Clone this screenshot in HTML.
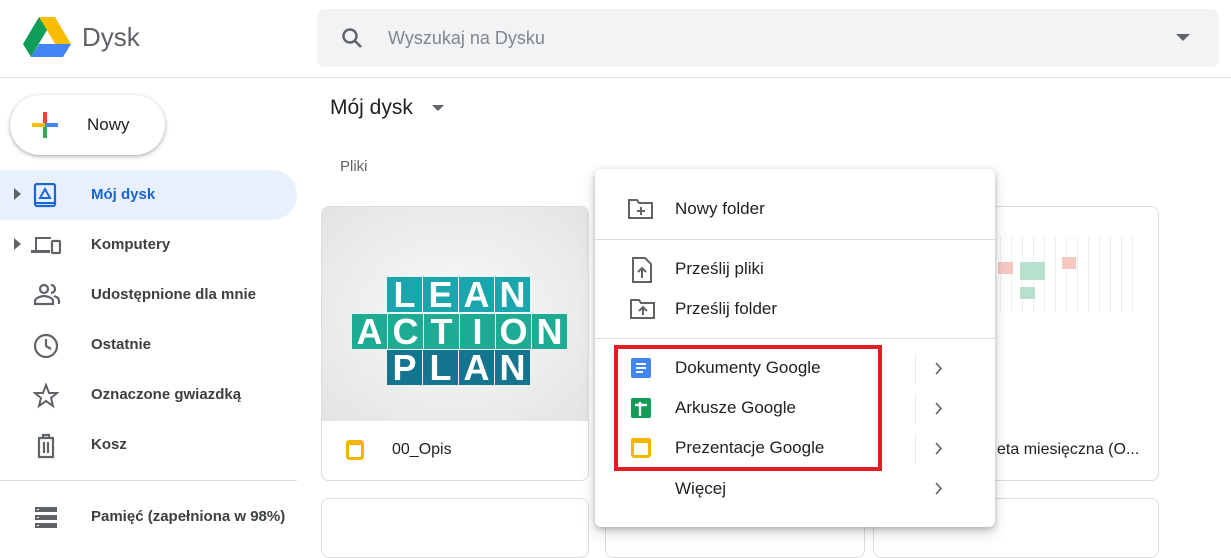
<!DOCTYPE html>
<html><head><meta charset="utf-8"><style>
*{margin:0;padding:0;box-sizing:border-box}
body{width:1231px;height:537px;overflow:hidden;background:#fff;font-family:"Liberation Sans",Arial,sans-serif;position:relative;color:#3c4043}
.a{position:absolute}
.nav{position:absolute;left:0;width:297px;height:50px;font-size:15px;font-weight:bold;color:#3c4043}
.nav span{position:absolute;left:91px;top:16px}
.nav svg{position:absolute;left:33px;top:13px}
.mi{position:absolute;left:675px;font-size:17px;color:#202124}
.vs{position:absolute;left:915px;width:1px;height:30px;background:#e8eaed}
.row{position:absolute;display:flex;gap:1px;font-size:36px;font-weight:bold;color:#fff;line-height:35px}
.row b{width:35px;height:35px;text-align:center}
</style></head><body>
<svg class="a" style="left:23px;top:17px" width="48" height="40" viewBox="0 0 48 40">
<polygon points="16,0 32,0 48,27 40,40" fill="#fbbc04"/>
<polygon points="16,0 0,27 8,40 24,13" fill="#0f9d58"/>
<polygon points="8,40 40,40 48,27 16,27" fill="#4285f4"/>
</svg>
<div class="a" style="left:82px;top:22px;font-size:26px;color:#5f6368">Dysk</div>
<div class="a" style="left:317px;top:9px;width:902px;height:58px;background:#f1f3f4;border-radius:8px"></div>
<svg class="a" style="left:340px;top:26px" width="24" height="24" viewBox="0 0 24 24"><circle cx="10" cy="10" r="6.5" fill="none" stroke="#5f6368" stroke-width="2.4"/><line x1="15" y1="15" x2="21" y2="21" stroke="#5f6368" stroke-width="2.6"/></svg>
<div class="a" style="left:388px;top:28px;font-size:18px;color:#80868b">Wyszukaj na Dysku</div>
<svg class="a" style="left:1176px;top:34px" width="14" height="8"><polygon points="0,0 14,0 7,7" fill="#5f6368"/></svg>
<div class="a" style="left:0;top:77px;width:1231px;height:1px;background:#dadce0"></div>
<div class="a" style="left:10px;top:95px;width:155px;height:60px;border-radius:30px;box-shadow:0 1px 3px rgba(60,64,67,.35),0 2px 6px rgba(60,64,67,.15);background:#fff"></div>
<svg class="a" style="left:30px;top:110px" width="30" height="30" viewBox="0 0 30 30"><rect x="13" y="2" width="4" height="13" fill="#ea4335"/><rect x="13" y="15" width="4" height="13" fill="#34a853"/><rect x="2" y="13" width="13" height="4" fill="#fbbc04"/><rect x="15" y="13" width="13" height="4" fill="#4285f4"/></svg>
<div class="a" style="left:87px;top:115px;font-size:17px;color:#202124">Nowy</div>
<div class="nav" style="top:170px;background:#e8f0fe;border-radius:0 25px 25px 0;color:#1967d2"><svg style="left:14px;top:18px" width="8" height="12"><polygon points="0,0 7,6 0,12" fill="#5f6368"/></svg><svg width="24" height="26" viewBox="0 0 24 26"><rect x="2" y="1" width="20" height="22" rx="2" fill="none" stroke="#1967d2" stroke-width="2.2"/><polygon points="12,6 17,15 7,15" fill="none" stroke="#1967d2" stroke-width="2"/><line x1="3" y1="20" x2="21" y2="20" stroke="#1967d2" stroke-width="2"/></svg><span>Mój dysk</span></div>
<div class="nav" style="top:220px"><svg style="left:14px;top:18px" width="8" height="12"><polygon points="0,0 7,6 0,12" fill="#5f6368"/></svg><svg style="left:31px" width="30" height="24" viewBox="0 0 30 24"><path d="M4 4h16v2H6v11H4z M0 17h19v3H0z" fill="#5f6368"/><rect x="21" y="8" width="8" height="12" rx="1" fill="none" stroke="#5f6368" stroke-width="2.2"/></svg><span>Komputery</span></div>
<div class="nav" style="top:270px"><svg width="30" height="24" viewBox="0 0 30 24"><circle cx="11" cy="6" r="4" fill="none" stroke="#5f6368" stroke-width="2.2"/><path d="M2 21v-3c0-3 6-5 9-5s9 2 9 5v3z" fill="none" stroke="#5f6368" stroke-width="2.2"/><path d="M18 2a4 4 0 010 8 M21 13c3 1 5 2 5 5v3" fill="none" stroke="#5f6368" stroke-width="2.2"/></svg><span>Udostępnione dla mnie</span></div>
<div class="nav" style="top:320px"><svg width="26" height="26" viewBox="0 0 26 26"><circle cx="13" cy="13" r="11" fill="none" stroke="#5f6368" stroke-width="2.2"/><path d="M13 6v7l5 3" fill="none" stroke="#5f6368" stroke-width="2.2"/></svg><span>Ostatnie</span></div>
<div class="nav" style="top:370px"><svg width="26" height="26" viewBox="0 0 26 26"><polygon points="13,2 16,10 24,10 18,15 20,23 13,18 6,23 8,15 2,10 10,10" fill="none" stroke="#5f6368" stroke-width="2"/></svg><span>Oznaczone gwiazdką</span></div>
<div class="nav" style="top:420px"><svg width="26" height="26" viewBox="0 0 26 26"><path d="M5 5h16 M10 5V2h6v3 M6 5v19h14V5 M11 9v11 M15 9v11" fill="none" stroke="#5f6368" stroke-width="2.2"/></svg><span>Kosz</span></div>
<div class="a" style="left:0;top:480px;width:297px;height:1px;background:#dadce0"></div>
<div class="nav" style="top:492px"><svg width="26" height="26" viewBox="0 0 26 26"><rect x="2" y="2" width="22" height="5" fill="#5f6368"/><rect x="2" y="10" width="22" height="5" fill="#5f6368"/><rect x="2" y="18" width="22" height="5" fill="#5f6368"/><rect x="4" y="4" width="2" height="1" fill="#fff"/><rect x="4" y="12" width="2" height="1" fill="#fff"/><rect x="4" y="20" width="2" height="1" fill="#fff"/></svg><span>Pamięć (zapełniona w 98%)</span></div>
<div class="a" style="left:330px;top:96px;font-size:21px;color:#202124">Mój dysk</div>
<svg class="a" style="left:432px;top:105px" width="12" height="7"><polygon points="0,0 12,0 6,6" fill="#5f6368"/></svg>
<div class="a" style="left:340px;top:158px;font-size:15px;color:#5f6368">Pliki</div>
<div class="a" style="left:321px;top:206px;width:268px;height:275px;border:1px solid #dadce0;border-radius:8px;overflow:hidden">
<div style="height:214px;background:radial-gradient(ellipse at center,#fafafa 0%,#e3e3e3 100%);position:relative">
<div class="row" style="left:65px;top:70px"><b style="background:#1ba6ae">L</b><b style="background:#1ba6ae">E</b><b style="background:#1ba6ae">A</b><b style="background:#1ba6ae">N</b></div>
<div class="row" style="left:30px;top:107px"><b style="background:#1eab94">A</b><b style="background:#1eab94">C</b><b style="background:#1eab94">T</b><b style="background:#1eab94">I</b><b style="background:#1eab94">O</b><b style="background:#1eab94">N</b></div>
<div class="row" style="left:65px;top:143px"><b style="background:#15758f">P</b><b style="background:#15758f">L</b><b style="background:#15758f">A</b><b style="background:#15758f">N</b></div>
</div>
<svg class="a" style="left:24px;top:233px" width="18" height="20"><rect x="1.5" y="1.5" width="15" height="17" rx="2" fill="none" stroke="#f4b400" stroke-width="3"/><rect x="1" y="1" width="16" height="4" fill="#f4b400"/></svg>
<div class="a" style="left:70px;top:234px;font-size:16px;color:#202124">00_Opis</div>
</div>
<div class="a" style="left:321px;top:498px;width:268px;height:60px;border:1px solid #dadce0;border-radius:8px"></div>
<div class="a" style="left:605px;top:498px;width:260px;height:60px;border:1px solid #dadce0;border-radius:8px"></div>
<div class="a" style="left:864px;top:206px;width:295px;height:275px;border:1px solid #dadce0;border-radius:8px">
<div class="a" style="left:125px;top:30px;width:150px;height:75px;background:repeating-linear-gradient(90deg,#fff 0,#fff 10px,#eee 10px,#eee 11px)"></div>
<div class="a" style="left:133px;top:55px;width:15px;height:12px;background:#f4c7c3"></div>
<div class="a" style="left:155px;top:55px;width:25px;height:18px;background:#b7e1cd"></div>
<div class="a" style="left:197px;top:50px;width:14px;height:12px;background:#f4c7c3"></div>
<div class="a" style="left:155px;top:80px;width:15px;height:12px;background:#b7e1cd"></div>
<div class="a" style="left:132px;top:234px;font-size:16px;color:#202124">eta miesięczna (O...</div>
</div>
<div class="a" style="left:873px;top:498px;width:286px;height:60px;border:1px solid #dadce0;border-radius:8px"></div>
<div class="a" style="left:595px;top:169px;width:400px;height:358px;background:#fff;border-radius:6px;box-shadow:0 2px 6px rgba(60,64,67,.3),0 6px 14px rgba(60,64,67,.2)"></div>
<svg class="a" style="left:628px;top:198px" width="26" height="22" viewBox="0 0 26 22"><path d="M1 2h8l2 3h13v15H1z" fill="none" stroke="#5f6368" stroke-width="2"/><path d="M13 9v8 M9 13h8" stroke="#5f6368" stroke-width="2"/></svg>
<div class="mi" style="top:199px">Nowy folder</div>
<div class="a" style="left:595px;top:239px;width:400px;height:1px;background:#dadce0"></div>
<svg class="a" style="left:632px;top:257px" width="20" height="26" viewBox="0 0 20 26"><path d="M1 1h12l6 6v18H1z" fill="none" stroke="#5f6368" stroke-width="2"/><path d="M10 21v-9 M6 15l4-4 4 4" fill="none" stroke="#5f6368" stroke-width="2"/></svg>
<div class="mi" style="top:259px">Prześlij pliki</div>
<svg class="a" style="left:630px;top:298px" width="26" height="22" viewBox="0 0 26 22"><path d="M1 2h8l2 3h13v15H1z" fill="none" stroke="#5f6368" stroke-width="2"/><path d="M13 17v-8 M9 13l4-4 4 4" fill="none" stroke="#5f6368" stroke-width="2"/></svg>
<div class="mi" style="top:299px">Prześlij folder</div>
<div class="a" style="left:595px;top:338px;width:400px;height:1px;background:#dadce0"></div>
<svg class="a" style="left:631px;top:358px" width="20" height="20"><rect width="20" height="20" rx="2" fill="#4285f4"/><path d="M5 6h10 M5 10h10 M5 14h7" stroke="#fff" stroke-width="2"/></svg>
<div class="mi" style="top:358px">Dokumenty Google</div>
<svg class="a" style="left:631px;top:398px" width="20" height="20"><rect width="20" height="20" rx="2" fill="#0f9d58"/><path d="M4 7h12 M9 4v14" stroke="#fff" stroke-width="2.4"/></svg>
<div class="mi" style="top:398px">Arkusze Google</div>
<svg class="a" style="left:631px;top:438px" width="20" height="20"><rect x="1.5" y="1.5" width="17" height="17" rx="2" fill="none" stroke="#f4b400" stroke-width="3"/><rect x="0" y="0" width="20" height="5" rx="2" fill="#f4b400"/></svg>
<div class="mi" style="top:438px">Prezentacje Google</div>
<div class="mi" style="top:479px">Więcej</div>
<div class="a" style="left:614px;top:345px;width:268px;height:126px;border:4px solid #e31b23"></div>
<div class="vs" style="top:354px"></div><div class="vs" style="top:394px"></div><div class="vs" style="top:434px"></div>
<svg class="a" style="left:935px;top:362px" width="8" height="13"><path d="M1 1l5 5.5-5 5.5" fill="none" stroke="#5f6368" stroke-width="1.6"/></svg>
<svg class="a" style="left:935px;top:402px" width="8" height="13"><path d="M1 1l5 5.5-5 5.5" fill="none" stroke="#5f6368" stroke-width="1.6"/></svg>
<svg class="a" style="left:935px;top:442px" width="8" height="13"><path d="M1 1l5 5.5-5 5.5" fill="none" stroke="#5f6368" stroke-width="1.6"/></svg>
<svg class="a" style="left:935px;top:482px" width="8" height="13"><path d="M1 1l5 5.5-5 5.5" fill="none" stroke="#5f6368" stroke-width="1.6"/></svg>
</body></html>
